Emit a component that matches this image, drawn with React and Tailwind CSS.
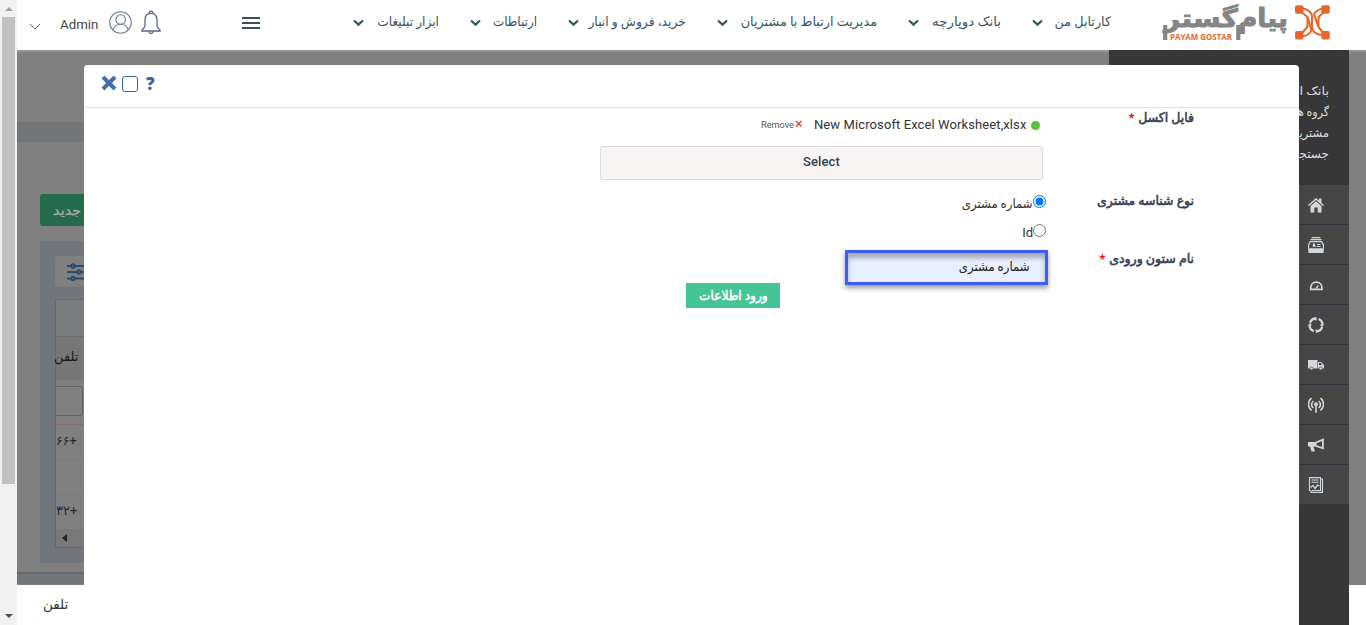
import React from "react";

const nav = [
  { label: "کارتابل من", box: "w-[110px]", fit: "scale-x-[.98]" },
  { label: "بانک دوپارچه", box: "w-[124px]", fit: "scale-x-[1.03]" },
  { label: "مدیریت ارتباط با مشتریان", box: "w-[191px]", fit: "scale-x-[.985]" },
  { label: "خرید، فروش و انبار", box: "w-[149px]", fit: "scale-x-[.95]" },
  { label: "ارتباطات", box: "w-[98px]", fit: "scale-x-[.92]" },
  { label: "ابزار تبلیغات", box: "w-[117px]", fit: "scale-x-[.94]" },
];

function Logo() {
  return (
    <svg width="170" height="40" viewBox="0 0 170 40" className="block">
      <text x="127" y="25" direction="rtl" textLength="50" lengthAdjust="spacingAndGlyphs" fontSize="26" fontWeight="700" fill="#858585" stroke="#858585" strokeWidth="0.9" fontFamily="DejaVu Sans, sans-serif">پیام</text>
      <text x="77" y="25" direction="rtl" textLength="74" lengthAdjust="spacingAndGlyphs" fontSize="25" fontWeight="700" fill="#858585" stroke="#858585" strokeWidth="0.9" fontFamily="DejaVu Sans, sans-serif">گستر</text>
      <path d="M4.2 23V38M77.3 23V38" stroke="#858585" strokeWidth="4.2" />
      <text x="9" y="37.5" textLength="62" lengthAdjust="spacingAndGlyphs" fontSize="8.6" fontWeight="700" fill="#e8662b" fontFamily="Open Sans, sans-serif">PAYAM GOSTAR</text>
      <g fill="none" stroke="#e8662b" strokeWidth="2.1" strokeLinejoin="round">
        <path d="M139 9L146.5 15V25L139 33" />
        <path d="M164 9L157.5 15V25L164 33" />
        <path d="M141 6.5C146 7 150 10 151 14V25C151 30 156 33 162 33" />
        <path d="M162 6.5C158 7 155 9 153 12L157 24" />
        <path d="M141 34.5C146 34 149 32 150.5 28L146.5 15" />
      </g>
      <g fill="#e8662b">
        <rect x="134" y="3.3" width="8.5" height="8.5" rx="2" />
        <rect x="160.3" y="3.3" width="8.5" height="8.5" rx="2" />
        <rect x="134" y="29" width="8.5" height="8.5" rx="2" />
        <rect x="160.3" y="29" width="8.5" height="8.5" rx="2" />
      </g>
    </svg>
  );
}

function Chevron() {
  return (
    <svg width="11" height="8" viewBox="0 0 11 8" className="mt-[2px] block shrink-0">
      <path d="M1 1.5L5.5 5.7L10 1.5" fill="none" stroke="#3f5560" strokeWidth="2.3" />
    </svg>
  );
}

function Header() {
  return (
    <header dir="ltr" className="flex h-[50px] shrink-0 bg-white text-[#3b5360]">
      <svg width="12" height="8" viewBox="0 0 12 8" className="mt-[23px] ml-[12px] shrink-0">
        <path d="M1 1L6 6L11 1" fill="none" stroke="#5f6b80" />
      </svg>
      <span className="mt-[15px] ml-[19px] w-[38px] shrink-0 text-[13.3px] leading-5 text-[#444]">Admin</span>
      <svg width="24" height="24" viewBox="0 0 24 24" className="mt-[11px] ml-[11px] shrink-0" fill="none" stroke="#6f7c93" strokeWidth="1.1">
        <circle cx="11.5" cy="11.5" r="10.8" />
        <circle cx="11.7" cy="8.5" r="4.8" />
        <path d="M4 19C5 15.5 8 13.3 11.7 13.3S18.3 15.5 19.2 19" />
      </svg>
      <svg width="20" height="24" viewBox="0 0 20 24" className="mt-[10px] ml-[8px] shrink-0" fill="none" stroke="#5d6a82" strokeWidth="1.3">
        <path d="M.8 21H19.2C19.2 19 16 18.3 16 15.5V10C16 5.5 13.5 3.3 10 3.3S4 5.5 4 10V15.5C4 18.3 .8 19 .8 21Z" />
        <path d="M8.2 3.4C7.5 .4 12.5 .4 11.8 3.4M7.8 21.2C8 24.2 12 24.2 12.2 21.2" />
      </svg>
      <svg width="18" height="12" viewBox="0 0 18 12" className="mt-[17px] ml-[81px] shrink-0">
        <path d="M0 1H18M0 6H18M0 11H18" stroke="#3b505c" strokeWidth="2" />
      </svg>
      <nav dir="rtl" className="ml-[61px] flex h-[44px] w-[789px] shrink-0 items-center text-[13px]">
        {nav.map((n) => (
          <div key={n.label} className={"flex shrink-0 items-center justify-between pl-[32px] " + n.box}>
            <span className={"-mr-px w-0 flex-1 origin-right whitespace-nowrap " + n.fit}>{n.label}</span>
            <Chevron />
          </div>
        ))}
      </nav>
      <div className="mt-[2px] ml-[51px] shrink-0">
        <Logo />
      </div>
    </header>
  );
}

const icons = [
  <g key="home"><path d="M0 8L8 1L11 3.5V1.5H13.5V6L16 8L15 9L8 3L1 9Z" /><path d="M2.5 9L8 4.3L13.5 9V15.5H9.7V10.5H6.3V15.5H2.5Z" /></g>,
  <g key="bank"><path d="M3.5 0H12.5V1.2H3.5ZM2.5 2H13.5V3.2H2.5ZM2 4H14L16 7.5V11H14.8V8L13.3 5.3H2.7L1.2 8V11H0V7.5Z" /><path d="M5 6.8L7 6.3V8L8.5 9.8H4.5ZM9 7H12.5V8H9ZM9 9H12.5V10H9ZM0 11.3H16L15.5 16H.5Z" /></g>,
  <g key="gauge" fill="none" stroke="#d4d7dc" strokeWidth="1.7"><path d="M2.7 12.4V11C2.7 7.6 5 5.2 8.3 5.2S14 7.6 14 11V12.4Z" /><path d="M8 11.5L10.3 8.5" strokeWidth="1.3" /></g>,
  <g key="ring"><circle cx="8" cy="8" r="6.5" fill="none" stroke="#d4d7dc" strokeWidth="2.3" strokeDasharray="8 2.21" strokeDashoffset="-2" /><path d="M12 7.5L16 8L13.5 10ZM4 8.5L0 8L2.5 6ZM8.5 4L8 0L6 2.5ZM7.5 12L8 16L10 13.5Z" /></g>,
  <g key="truck"><path d="M0 3H9.5V11.5H0ZM10 5H13L16 8V11.5H10Z" /><path d="M11 6H12.7L14.3 8H11Z" fill="#464646" /><circle cx="3.5" cy="11.5" r="1.6" stroke="#464646" strokeWidth=".7" /><circle cx="12.8" cy="11.5" r="1.6" stroke="#464646" strokeWidth=".7" /></g>,
  <g key="tower" fill="none" stroke="#d4d7dc" strokeWidth="1.6"><path d="M3.6 1.2C-.6 4-.6 10.5 3.6 13.3M12.4 1.2C16.6 4 16.6 10.5 12.4 13.3M5.4 4C2.9 6 2.9 9 5.4 10.8M10.6 4C13.1 6 13.1 9 10.6 10.8M8 8V15.8" /><circle cx="8" cy="7.3" r="1.2" fill="#d4d7dc" /></g>,
  <g key="horn"><path d="M0 5H7L15.8 1.3V12.6L7 9.5H5.5L7 14.5H3.5L2 9.5H0Z" /><path d="M8.5 6.2L14 3.9V10L8.5 8.2Z" fill="#464646" /></g>,
  <g key="report" fill="none" stroke="#d4d7dc" strokeWidth="1.1"><path d="M2.5 13.5H1.5V.6H12.5V13.5H4M12.5 2H14.5V15.4H3V13.5M3.5 3H10.5M3.5 5.2H10.5" /><path d="M2.5 10.5L5 8.5L7 11.5L9.5 8L11.5 9" strokeWidth="1.3" /></g>,
];

function Backdrop() {
  return (
    <div dir="ltr" className="flex min-h-0 flex-1">
      <div className="flex w-[1092px] flex-col bg-[#808080] shadow-[inset_0_3px_3px_-2px_#aaa]">
        <div className="mt-[72px] h-[20px] shrink-0 bg-[#727678]" />
        <div className="mt-[52px] ml-[23px] h-[32px] w-[100px] shrink-0 rounded-[3px] bg-[#236b4b] pl-[13px] text-[13px] leading-[34px] text-[#a3a9a5]"><span className="inline-block origin-left scale-x-[1.12] [-webkit-text-stroke:0.3px]">جدید</span></div>
        <div className="mt-[15px] ml-[23px] h-[322px] w-[200px] shrink-0 bg-[#70767b] pt-[15px] pl-[15px]">
          <div className="h-[31px] rounded-[3px] bg-[#808080] pt-[6px] pl-[12px]">
            <svg width="24" height="20" viewBox="0 0 24 20" stroke="#29496f" strokeWidth="2" fill="#808080">
              <path d="M0 4H24M0 10H24M0 16.5H24" />
              <circle cx="6" cy="4" r="1.7" /><circle cx="12" cy="10" r="1.7" /><circle cx="6" cy="16.5" r="1.7" />
            </svg>
          </div>
          <div className="mt-[12px] flex h-[249px] flex-col border border-[#676b6e] bg-[#808080] text-[13px] text-[#26292c]">
            <div className="h-[37px] shrink-0 border-b border-[#696d6f] bg-[#7b7c7d]" />
            <div className="h-[43px] shrink-0 bg-[#777] leading-[40px] text-[#16181a]"><span className="-ml-[2px]">تلفن</span></div>
            <div className="h-[45px] shrink-0 border-b border-[#906b6b] pt-[6px]"><div className="h-[30px] w-[27px] rounded-r-[3px] border border-l-0 border-[#626262]" /></div>
            <div className="h-[35px] shrink-0 border-b border-[#7a7a7a] text-[12.5px] leading-[31px]"><bdi dir="ltr">۶۶+</bdi></div>
            <div className="h-[35px] shrink-0 border-b border-[#7a7a7a]" />
            <div className="h-[34px] shrink-0 text-[13px] leading-[31px]"><bdi dir="ltr">۳۲+</bdi></div>
            <div className="flex flex-1 items-center bg-[#797979] pl-[6px]"><svg width="5" height="8"><path d="M5 0V8L0 4Z" fill="#222" /></svg></div>
          </div>
        </div>
        <div className="mt-[9px] h-[2px] shrink-0 bg-[#676a6c]" />
        <div className="h-[10px] shrink-0 bg-[#70767b]" />
        <div className="mt-px h-[40px] shrink-0 bg-white pl-[26px] text-[13.5px] leading-[39px] text-[#333]">تلفن</div>
      </div>
      <aside className="flex w-[240px] flex-col items-end bg-[#373737]">
        <div dir="rtl" className="h-[135px] w-full shrink-0 pt-[31px] pr-[20px] text-[12px] leading-[21px] text-[#dedede]">
          <p className="origin-right scale-x-[1.08]">بانک اطلاعات</p><p className="origin-right scale-x-[.92]">گروه ها</p><p className="origin-right scale-x-[.96]">مشتریان</p><p>جستجو</p>
        </div>
        {icons.map((icon, i) => (
          <div key={i} className="flex h-[40px] w-[50px] shrink-0 items-center border-b border-[#343440] bg-[#464646] pl-[9px]">
            <svg width="16" height="16" viewBox="0 0 16 16" fill="#d4d7dc">{icon}</svg>
          </div>
        ))}
      </aside>
      <div className="h-[535px] w-[17px] bg-[#808080] shadow-[inset_0_3px_3px_-2px_#aaa]" />
    </div>
  );
}

function Label({ children, fit, required }) {
  return (
    <p className={"origin-right whitespace-nowrap [-webkit-text-stroke:0.55px] " + fit}>
      {children}
      {required && <b className="mr-[4px] text-[#f00] [-webkit-text-stroke:0]">*</b>}
    </p>
  );
}

function Dialog() {
  return (
    <section dir="rtl" className="absolute top-[65px] left-[84px] h-[560px] w-[1215px] rounded-t-[4px] bg-white text-[#333]">
      <div dir="ltr" className="flex h-[43px] border-b border-[#e2e2e2] pl-[17px] text-[#3462a3]">
        <svg width="16" height="16" viewBox="0 0 16 16" className="mt-[10px]"><path d="M2 2L14 14M14 2L2 14" stroke="#446fae" strokeWidth="4" /></svg>
        <span className="mt-[11px] ml-[5px] h-[16px] w-[16px] rounded-[3px] border-[1.5px] border-[#3462a3]" />
        <span className="mt-[9px] ml-[8px] font-[Open_Sans] text-[17px] leading-[20px] font-extrabold">?</span>
      </div>
      <div className="flex pr-[105px]">
        <div className="w-[148px] shrink-0 text-[13px] leading-5 text-[#34404f]">
          <Label fit="scale-x-[.96]" required>فایل اکسل</Label>
          <div className="h-[63px]" />
          <Label fit="scale-x-[.96]">نوع شناسه مشتری</Label>
          <div className="h-[38px]" />
          <Label fit="scale-x-[.965]" required>نام ستون ورودی</Label>
        </div>
        <div className="w-[450px]">
          <div dir="ltr" className="mt-[7px] flex h-[20px] items-center justify-end pr-[6px]">
            <span className="mr-px text-[9.2px] text-[#555]">Remove</span>
            <svg width="8" height="8" viewBox="0 0 8 8" className="mr-[11px] mb-[2px]"><path d="M1 1L6.5 6.5M6.5 1L1 6.5" stroke="#f0472b" strokeWidth="1.5" /></svg>
            <span className="w-[214px] text-[13px] tracking-[0.1px] whitespace-nowrap">New Microsoft Excel Worksheet,xlsx</span>
            <span className="ml-[3px] h-[9px] w-[9px] rounded-full bg-[#5bc236]" />
          </div>
          <button className="mt-[11px] mr-[3px] block h-[34px] w-[443px] rounded-[3px] border border-[#dbdbdb] bg-[#f8f4f4] pb-[3px] text-[13px] font-medium tracking-[0.1px] text-[#34404f]">Select</button>
          <label className="mt-[10px] flex h-[24px] items-center"><input type="radio" name="kind" defaultChecked className="m-0 mb-[2px] h-[13px] w-[13px]" /><span className="mt-[3px] origin-right scale-x-[.9] text-[13px]">شماره مشتری</span></label>
          <label className="mt-[5px] flex h-[24px] items-center"><input type="radio" name="kind" className="m-0 mb-[2px] h-[13px] w-[13px]" /><span className="mt-[3px] text-[13px]">Id</span></label>
          <div className="-mr-[2px] mt-[7px] h-[35px] w-[203px] border-[3px] border-[#3f5cf6] bg-[#e8effd] pr-[15px] text-[13px] leading-[27px] text-[#222] shadow-[0_3px_5px_#999,inset_0_5px_5px_#a3a8b5]"><span className="inline-block origin-right scale-x-[.9]">شماره مشتری</span></div>
          <button className="-mt-[2px] mr-[266px] block h-[25px] w-[94px] bg-[#46c594] text-[12.5px] leading-[24px] text-white"><span className="inline-block scale-x-[.97] whitespace-nowrap [-webkit-text-stroke:0.5px]">ورود اطلاعات</span></button>
        </div>
      </div>
    </section>
  );
}

export default function App() {
  return (
    <div dir="ltr" className="relative flex h-[625px] w-[1366px] overflow-hidden bg-white font-[Roboto,'DejaVu_Sans',sans-serif]">
      <div className="flex w-[17px] shrink-0 flex-col items-center bg-[#f1f1f1]">
        <svg width="8" height="4" className="mt-[7px] shrink-0"><path d="M0 4L4 0L8 4Z" fill="#a3a3a3" /></svg>
        <div className="mt-[6px] h-[467px] w-[13px] bg-[#c1c1c1]" />
        <svg width="8" height="4" className="mt-[130px] shrink-0"><path d="M0 0L4 4L8 0Z" fill="#505050" /></svg>
      </div>
      <div className="flex w-[1349px] flex-col">
        <Header />
        <Backdrop />
      </div>
      <Dialog />
    </div>
  );
}
